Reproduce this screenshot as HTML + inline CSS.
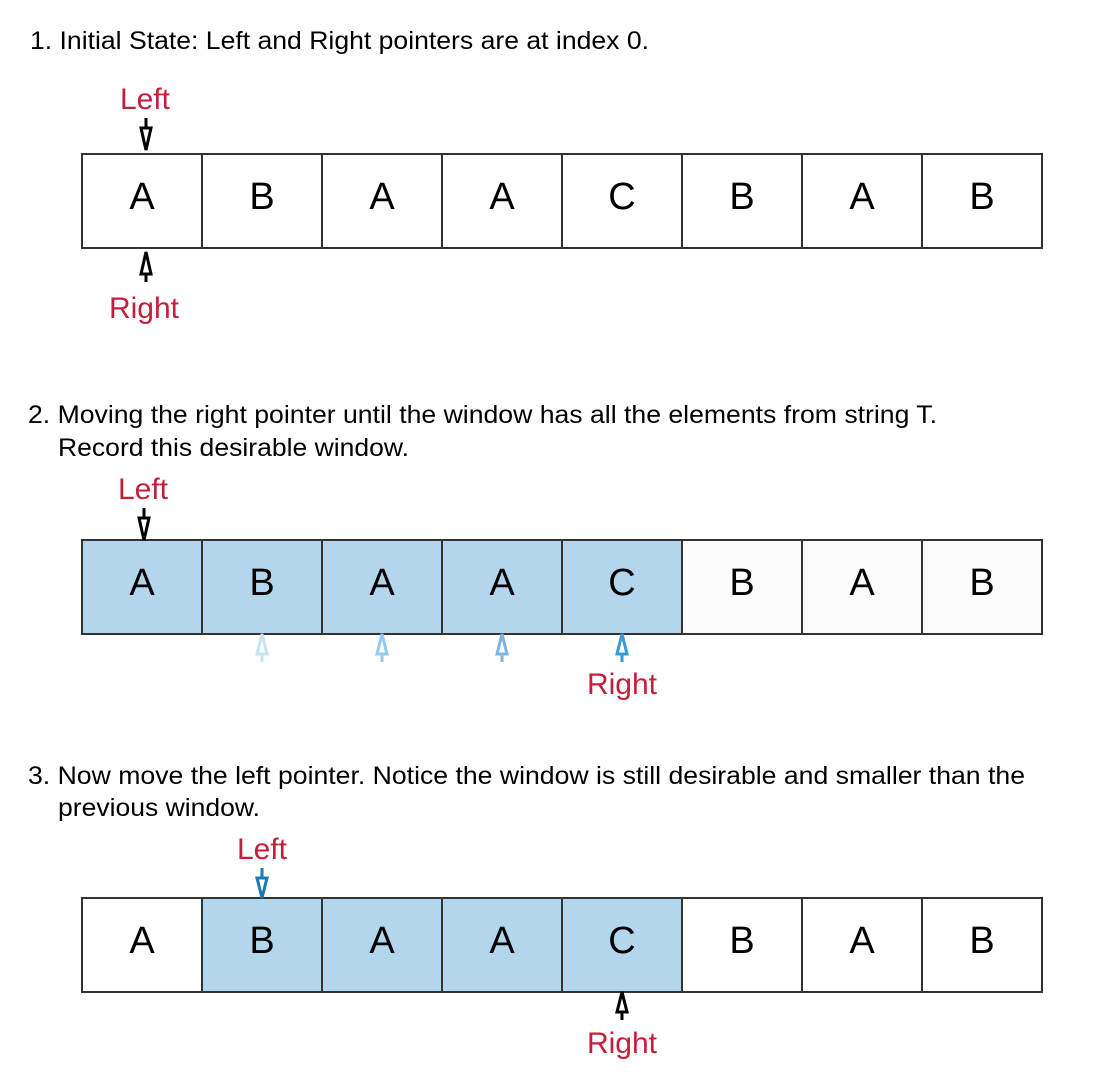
<!DOCTYPE html>
<html><head><meta charset="utf-8"><style>html,body{margin:0;padding:0;background:#fff}svg{display:block}</style></head>
<body>
<svg width="1104" height="1078" viewBox="0 0 1104 1078" xmlns="http://www.w3.org/2000/svg" font-family="Liberation Sans, Arial, sans-serif">
<g font-size="25" fill="#000">
<text x="30" y="49" textLength="619" lengthAdjust="spacingAndGlyphs">1. Initial State: Left and Right pointers are at index 0.</text>
<text x="28" y="423" textLength="909" lengthAdjust="spacingAndGlyphs">2. Moving the right pointer until the window has all the elements from string T.</text>
<text x="58" y="456" textLength="351" lengthAdjust="spacingAndGlyphs">Record this desirable window.</text>
<text x="28" y="784" textLength="997" lengthAdjust="spacingAndGlyphs">3. Now move the left pointer. Notice the window is still desirable and smaller than the</text>
<text x="58" y="816" textLength="202" lengthAdjust="spacingAndGlyphs">previous window.</text>
</g>
<g stroke="#333" stroke-width="2">
<rect x="82" y="154" width="960" height="94" fill="#fff"/>
<rect x="82" y="540" width="960" height="94" fill="#fbfbfb"/>
<rect x="82" y="540" width="600" height="94" fill="#b3d6ec"/>
<rect x="82" y="898" width="960" height="94" fill="#fff"/>
<rect x="202" y="898" width="480" height="94" fill="#b3d6ec"/>
<path d="M202 154V248M322 154V248M442 154V248M562 154V248M682 154V248M802 154V248M922 154V248
M202 540V634M322 540V634M442 540V634M562 540V634M682 540V634M802 540V634M922 540V634
M202 898V992M322 898V992M442 898V992M562 898V992M682 898V992M802 898V992M922 898V992"/>
</g>
<g font-size="38" text-anchor="middle" fill="#000">
<text x="142" y="209">A</text><text x="262" y="209">B</text><text x="382" y="209">A</text><text x="502" y="209">A</text><text x="622" y="209">C</text><text x="742" y="209">B</text><text x="862" y="209">A</text><text x="982" y="209">B</text>
<text x="142" y="595">A</text><text x="262" y="595">B</text><text x="382" y="595">A</text><text x="502" y="595">A</text><text x="622" y="595">C</text><text x="742" y="595">B</text><text x="862" y="595">A</text><text x="982" y="595">B</text>
<text x="142" y="953">A</text><text x="262" y="953">B</text><text x="382" y="953">A</text><text x="502" y="953">A</text><text x="622" y="953">C</text><text x="742" y="953">B</text><text x="862" y="953">A</text><text x="982" y="953">B</text>
</g>
<g font-size="30" text-anchor="middle" fill="#c41e3a">
<text x="145" y="109">Left</text>
<text x="144" y="318">Right</text>
<text x="143" y="499">Left</text>
<text x="622" y="694">Right</text>
<text x="262" y="859">Left</text>
<text x="622" y="1053">Right</text>
</g>
<g fill="none" stroke-width="3">
<path d="M146 118V128M141 128H151L146 150Z" stroke="#000"/>
<path d="M144 508V518M139 518H149L144 540Z" stroke="#000"/>
<path d="M262 868V878M257 878H267L262 898Z" stroke="#1a78b4"/>
<path d="M146 282V274M141 274H151L146 252Z" stroke="#000"/>
<path d="M262 662V654M257 654H267L262 634Z" stroke="#c8e4f5"/>
<path d="M382 662V654M377 654H387L382 634Z" stroke="#93cbec"/>
<path d="M502 662V654M497 654H507L502 634Z" stroke="#7fb5e0"/>
<path d="M622 662V654M617 654H627L622 634Z" stroke="#3a9ad6"/>
<path d="M622 1020V1012M617 1012H627L622 992Z" stroke="#000"/>
</g>
</svg>
</body></html>
